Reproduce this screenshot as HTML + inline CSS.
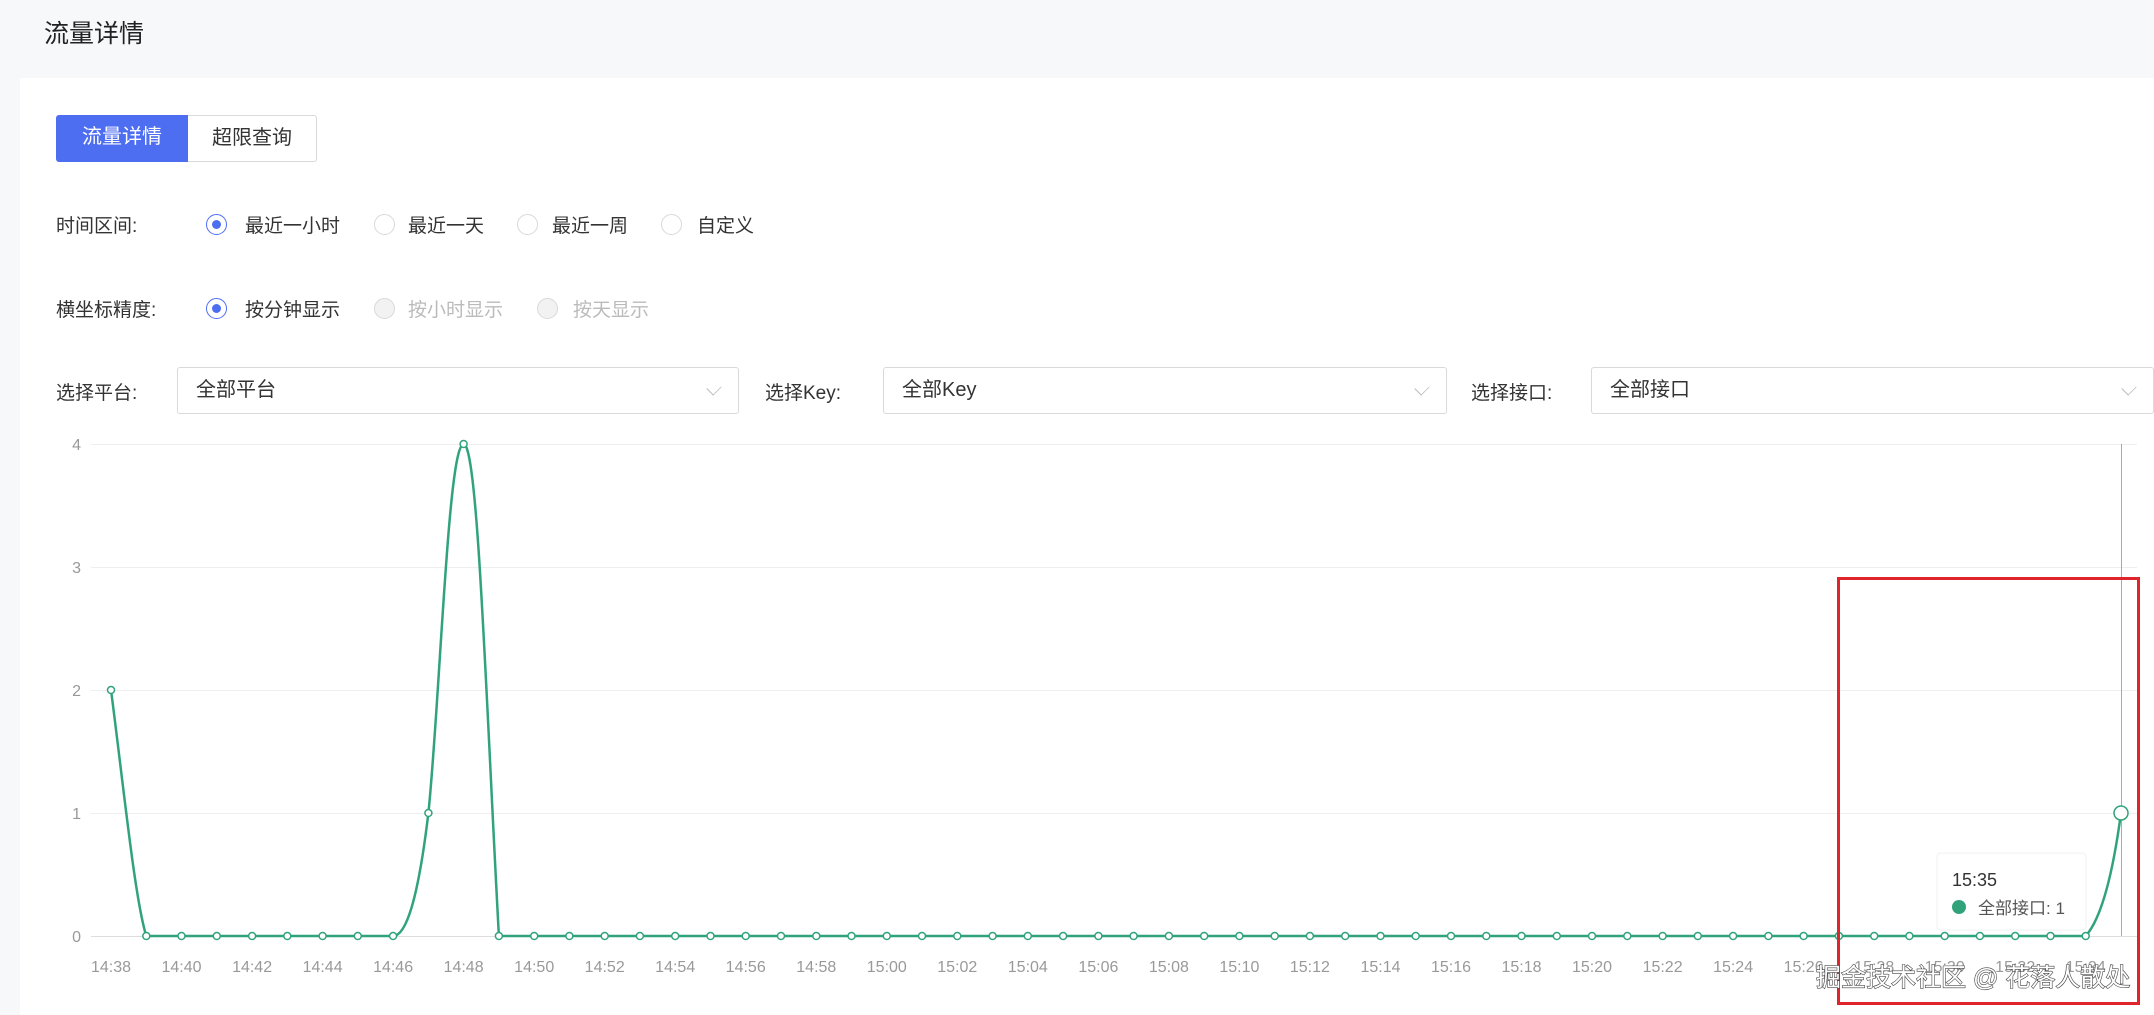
<!DOCTYPE html>
<html><head><meta charset="utf-8"><style>
*{margin:0;padding:0;box-sizing:border-box}
body{width:2154px;height:1015px;background:#f7f8fa;font-family:"Liberation Sans","Noto Sans CJK SC",sans-serif;color:#333;position:relative;overflow:hidden}
.abs{position:absolute}
.title{left:44px;top:14px;font-size:25px;color:#222}
.card{left:20px;top:78px;width:2134px;height:937px;background:#fff}
.tab{top:115px;height:47px;font-size:20px;line-height:45px;text-align:center}
.lbl{font-size:19px;color:#333}
.rad{width:21px;height:21px;border-radius:50%;border:1px solid #d9d9d9;background:#fff}
.rad.on{border-color:#4e6ef2}
.rad.on::after{content:"";position:absolute;left:5px;top:5px;width:9px;height:9px;border-radius:50%;background:#4e6ef2}
.rad.dis{background:#f2f2f2}
.sel{top:367px;height:47px;border:1px solid #d9d9d9;border-radius:3px;background:#fff;font-size:20px;line-height:45px;padding-left:18px}
.arr{position:absolute;right:18px;top:14px;width:12px;height:12px;border-right:1.5px solid #bbb;border-bottom:1.5px solid #bbb;transform:rotate(45deg) scaleX(.8)}
</style></head><body>
<div class="abs title">流量详情</div>
<div class="abs card"></div>
<div class="abs tab" style="left:56px;width:132px;background:#4e6ef2;color:#fff;border-radius:3px 0 0 3px">流量详情</div>
<div class="abs tab" style="left:188px;width:129px;border:1px solid #d9d9d9;border-left:none;border-radius:0 3px 3px 0">超限查询</div>

<div class="abs lbl" style="left:56px;top:211px">时间区间:</div>
<div class="abs rad on" style="left:206px;top:214px"></div><div class="abs lbl" style="left:245px;top:211px">最近一小时</div>
<div class="abs rad" style="left:374px;top:214px"></div><div class="abs lbl" style="left:408px;top:211px">最近一天</div>
<div class="abs rad" style="left:517px;top:214px"></div><div class="abs lbl" style="left:552px;top:211px">最近一周</div>
<div class="abs rad" style="left:661px;top:214px"></div><div class="abs lbl" style="left:697px;top:211px">自定义</div>

<div class="abs lbl" style="left:56px;top:295px">横坐标精度:</div>
<div class="abs rad on" style="left:206px;top:298px"></div><div class="abs lbl" style="left:245px;top:295px">按分钟显示</div>
<div class="abs rad dis" style="left:374px;top:298px"></div><div class="abs lbl" style="left:408px;top:295px;color:#bbb">按小时显示</div>
<div class="abs rad dis" style="left:537px;top:298px"></div><div class="abs lbl" style="left:573px;top:295px;color:#bbb">按天显示</div>

<div class="abs lbl" style="left:56px;top:378px">选择平台:</div>
<div class="abs sel" style="left:177px;width:562px">全部平台<span class="arr"></span></div>
<div class="abs lbl" style="left:765px;top:378px">选择Key:</div>
<div class="abs sel" style="left:883px;width:564px">全部Key<span class="arr"></span></div>
<div class="abs lbl" style="left:1471px;top:378px">选择接口:</div>
<div class="abs sel" style="left:1591px;width:563px">全部接口<span class="arr"></span></div>

<svg class="abs" style="left:0;top:0" width="2154" height="1015" font-family="Liberation Sans, sans-serif">
<g stroke="#eee" stroke-width="1">
<line x1="91" y1="444.5" x2="2137" y2="444.5"/><line x1="91" y1="567.5" x2="2137" y2="567.5"/><line x1="91" y1="690.5" x2="2137" y2="690.5"/><line x1="91" y1="813.5" x2="2137" y2="813.5"/>
</g>
<line x1="91" y1="936.5" x2="2137" y2="936.5" stroke="#ddd"/>
<line x1="2121.5" y1="444" x2="2121.5" y2="936" stroke="#aaa"/>
<g fill="#999" font-size="16" text-anchor="end">
<text x="81" y="450">4</text><text x="81" y="573">3</text><text x="81" y="696">2</text><text x="81" y="819">1</text><text x="81" y="942">0</text>
</g>
<g fill="#999" font-size="16" text-anchor="middle">
<text x="111" y="972">14:38</text><text x="181.5" y="972">14:40</text><text x="252.1" y="972">14:42</text><text x="322.6" y="972">14:44</text><text x="393.1" y="972">14:46</text><text x="463.6" y="972">14:48</text><text x="534.2" y="972">14:50</text><text x="604.7" y="972">14:52</text><text x="675.2" y="972">14:54</text><text x="745.7" y="972">14:56</text><text x="816.3" y="972">14:58</text><text x="886.8" y="972">15:00</text><text x="957.3" y="972">15:02</text><text x="1027.8" y="972">15:04</text><text x="1098.4" y="972">15:06</text><text x="1168.9" y="972">15:08</text><text x="1239.4" y="972">15:10</text><text x="1309.9" y="972">15:12</text><text x="1380.5" y="972">15:14</text><text x="1451" y="972">15:16</text><text x="1521.5" y="972">15:18</text><text x="1592" y="972">15:20</text><text x="1662.6" y="972">15:22</text><text x="1733.1" y="972">15:24</text><text x="1803.6" y="972">15:26</text><text x="1874.2" y="972">15:28</text><text x="1944.7" y="972">15:30</text><text x="2015.2" y="972">15:32</text><text x="2085.7" y="972">15:34</text>
</g>
<path d="M111,690 C124,790 135,900 146.3,936 L393.1,936 C406,936 418,900 428.4,813 C440,700 448,444 463.6,444 C478,444 486,700 498.9,936 L2085.7,936 C2100,920 2112,880 2121,813" fill="none" stroke="#31a37a" stroke-width="2.5"/>
<g fill="#fff" stroke="#31a37a" stroke-width="1.5">
<circle cx="111" cy="690" r="3.5"/><circle cx="146.3" cy="936" r="3.5"/><circle cx="181.5" cy="936" r="3.5"/><circle cx="216.8" cy="936" r="3.5"/><circle cx="252.1" cy="936" r="3.5"/><circle cx="287.3" cy="936" r="3.5"/><circle cx="322.6" cy="936" r="3.5"/><circle cx="357.8" cy="936" r="3.5"/><circle cx="393.1" cy="936" r="3.5"/><circle cx="428.4" cy="813" r="3.5"/><circle cx="463.6" cy="444" r="3.5"/><circle cx="498.9" cy="936" r="3.5"/><circle cx="534.2" cy="936" r="3.5"/><circle cx="569.4" cy="936" r="3.5"/><circle cx="604.7" cy="936" r="3.5"/><circle cx="639.9" cy="936" r="3.5"/><circle cx="675.2" cy="936" r="3.5"/><circle cx="710.5" cy="936" r="3.5"/><circle cx="745.7" cy="936" r="3.5"/><circle cx="781" cy="936" r="3.5"/><circle cx="816.3" cy="936" r="3.5"/><circle cx="851.5" cy="936" r="3.5"/><circle cx="886.8" cy="936" r="3.5"/><circle cx="922" cy="936" r="3.5"/><circle cx="957.3" cy="936" r="3.5"/><circle cx="992.6" cy="936" r="3.5"/><circle cx="1027.8" cy="936" r="3.5"/><circle cx="1063.1" cy="936" r="3.5"/><circle cx="1098.4" cy="936" r="3.5"/><circle cx="1133.6" cy="936" r="3.5"/><circle cx="1168.9" cy="936" r="3.5"/><circle cx="1204.2" cy="936" r="3.5"/><circle cx="1239.4" cy="936" r="3.5"/><circle cx="1274.7" cy="936" r="3.5"/><circle cx="1309.9" cy="936" r="3.5"/><circle cx="1345.2" cy="936" r="3.5"/><circle cx="1380.5" cy="936" r="3.5"/><circle cx="1415.7" cy="936" r="3.5"/><circle cx="1451" cy="936" r="3.5"/><circle cx="1486.3" cy="936" r="3.5"/><circle cx="1521.5" cy="936" r="3.5"/><circle cx="1556.8" cy="936" r="3.5"/><circle cx="1592" cy="936" r="3.5"/><circle cx="1627.3" cy="936" r="3.5"/><circle cx="1662.6" cy="936" r="3.5"/><circle cx="1697.8" cy="936" r="3.5"/><circle cx="1733.1" cy="936" r="3.5"/><circle cx="1768.4" cy="936" r="3.5"/><circle cx="1803.6" cy="936" r="3.5"/><circle cx="1838.9" cy="936" r="3.5"/><circle cx="1874.2" cy="936" r="3.5"/><circle cx="1909.4" cy="936" r="3.5"/><circle cx="1944.7" cy="936" r="3.5"/><circle cx="1979.9" cy="936" r="3.5"/><circle cx="2015.2" cy="936" r="3.5"/><circle cx="2050.5" cy="936" r="3.5"/><circle cx="2085.7" cy="936" r="3.5"/><circle cx="2121" cy="813" r="7"/>
</g>
<rect x="1937" y="853" width="149" height="77" rx="4" fill="#fff" stroke="#f0f0f0"/>
<text x="1952" y="886" font-size="18" fill="#333">15:35</text>
<circle cx="1959" cy="907" r="7" fill="#31a37a"/>
<text x="1978" y="914" font-size="17" fill="#555" font-family="Liberation Sans, Noto Sans CJK SC, sans-serif">全部接口: 1</text>
<rect x="1838.5" y="578.5" width="300" height="425" fill="none" stroke="#e0242c" stroke-width="3"/>
<text x="1816" y="986" font-size="25" fill="#fff" stroke="#444" stroke-width="1.2" paint-order="stroke" font-family="Liberation Sans, Noto Sans CJK SC, sans-serif">掘金技术社区 @ 花落人散处</text>
</svg>
</body></html>
